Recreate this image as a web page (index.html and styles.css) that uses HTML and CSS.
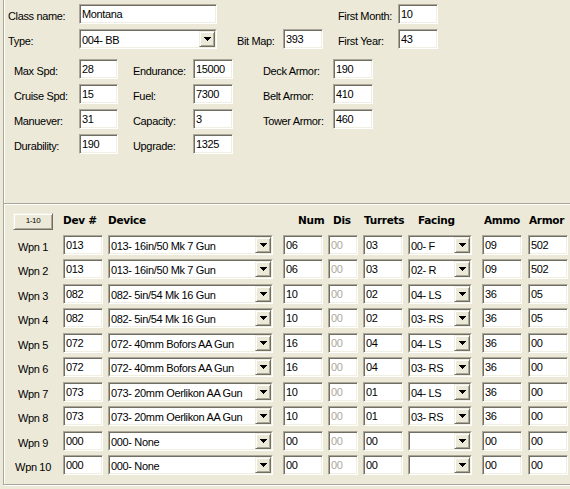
FILE: index.html
```html
<!DOCTYPE html>
<html>
<head>
<meta charset="utf-8">
<link rel="stylesheet" href="styles.css">
</head>
<body>
<div class="frame">
  <div class="top">
    <div class="row">
      <div class="lbl lbl-name">Class name:</div>
      <div class="edit w-wide">Montana</div>
      <div class="lbl lbl-first gap-month">First Month:</div>
      <div class="edit w40">10</div>
    </div>
    <div class="row">
      <div class="lbl lbl-name">Type:</div>
      <div class="combo w-wide"><div class="combo-in"><span class="combo-text">004- BB</span><span class="drop"><svg width="7" height="4" viewBox="0 0 7 4"><path d="M0 0h7v1H0zM1 1h5v1H1zM2 2h3v1H2zM3 3h1v1H3z"/></svg></span></div></div>
      <div class="lbl lbl-bitmap gap-bitmap">Bit Map:</div>
      <div class="edit w40">393</div>
      <div class="lbl lbl-first gap-year">First Year:</div>
      <div class="edit w40">43</div>
    </div>
    <div class="stats">
      <div class="sgrid s1">
        <div class="lbl">Max Spd:</div><div class="edit">28</div>
        <div class="lbl">Cruise Spd:</div><div class="edit">15</div>
        <div class="lbl">Manuever:</div><div class="edit">31</div>
        <div class="lbl">Durability:</div><div class="edit">190</div>
      </div>
      <div class="sgrid s2">
        <div class="lbl">Endurance:</div><div class="edit">15000</div>
        <div class="lbl">Fuel:</div><div class="edit">7300</div>
        <div class="lbl">Capacity:</div><div class="edit">3</div>
        <div class="lbl">Upgrade:</div><div class="edit">1325</div>
      </div>
      <div class="sgrid s3">
        <div class="lbl">Deck Armor:</div><div class="edit">190</div>
        <div class="lbl">Belt Armor:</div><div class="edit">410</div>
        <div class="lbl">Tower Armor:</div><div class="edit">460</div>
      </div>
    </div>
  </div>
  <div class="bottom">
    <div class="wpn">
      <div class="btn">1-10</div>
      <div class="hd">Dev #</div>
      <div class="hd">Device</div>
      <div class="hd hd-num">Num</div>
      <div class="hd hd-dis">Dis</div>
      <div class="hd hd-tur">Turrets</div>
      <div class="hd hd-fac">Facing</div>
      <div class="hd hd-amm">Ammo</div>
      <div class="hd hd-arm">Armor</div>

      <div class="wl">Wpn 1</div><div class="edit">013</div>
      <div class="combo w-dev"><div class="combo-in"><span class="combo-text">013- 16in/50 Mk 7 Gun</span><span class="drop"><svg width="7" height="4" viewBox="0 0 7 4"><path d="M0 0h7v1H0zM1 1h5v1H1zM2 2h3v1H2zM3 3h1v1H3z"/></svg></span></div></div>
      <div class="edit">06</div><div class="edit dis">00</div><div class="edit">03</div>
      <div class="combo w-fac"><div class="combo-in"><span class="combo-text">00- F</span><span class="drop"><svg width="7" height="4" viewBox="0 0 7 4"><path d="M0 0h7v1H0zM1 1h5v1H1zM2 2h3v1H2zM3 3h1v1H3z"/></svg></span></div></div>
      <div class="edit">09</div><div class="edit arm">502</div>

      <div class="wl">Wpn 2</div><div class="edit">013</div>
      <div class="combo w-dev"><div class="combo-in"><span class="combo-text">013- 16in/50 Mk 7 Gun</span><span class="drop"><svg width="7" height="4" viewBox="0 0 7 4"><path d="M0 0h7v1H0zM1 1h5v1H1zM2 2h3v1H2zM3 3h1v1H3z"/></svg></span></div></div>
      <div class="edit">06</div><div class="edit dis">00</div><div class="edit">03</div>
      <div class="combo w-fac"><div class="combo-in"><span class="combo-text">02- R</span><span class="drop"><svg width="7" height="4" viewBox="0 0 7 4"><path d="M0 0h7v1H0zM1 1h5v1H1zM2 2h3v1H2zM3 3h1v1H3z"/></svg></span></div></div>
      <div class="edit">09</div><div class="edit arm">502</div>

      <div class="wl">Wpn 3</div><div class="edit">082</div>
      <div class="combo w-dev"><div class="combo-in"><span class="combo-text">082- 5in/54 Mk 16 Gun</span><span class="drop"><svg width="7" height="4" viewBox="0 0 7 4"><path d="M0 0h7v1H0zM1 1h5v1H1zM2 2h3v1H2zM3 3h1v1H3z"/></svg></span></div></div>
      <div class="edit">10</div><div class="edit dis">00</div><div class="edit">02</div>
      <div class="combo w-fac"><div class="combo-in"><span class="combo-text">04- LS</span><span class="drop"><svg width="7" height="4" viewBox="0 0 7 4"><path d="M0 0h7v1H0zM1 1h5v1H1zM2 2h3v1H2zM3 3h1v1H3z"/></svg></span></div></div>
      <div class="edit">36</div><div class="edit arm">05</div>

      <div class="wl">Wpn 4</div><div class="edit">082</div>
      <div class="combo w-dev"><div class="combo-in"><span class="combo-text">082- 5in/54 Mk 16 Gun</span><span class="drop"><svg width="7" height="4" viewBox="0 0 7 4"><path d="M0 0h7v1H0zM1 1h5v1H1zM2 2h3v1H2zM3 3h1v1H3z"/></svg></span></div></div>
      <div class="edit">10</div><div class="edit dis">00</div><div class="edit">02</div>
      <div class="combo w-fac"><div class="combo-in"><span class="combo-text">03- RS</span><span class="drop"><svg width="7" height="4" viewBox="0 0 7 4"><path d="M0 0h7v1H0zM1 1h5v1H1zM2 2h3v1H2zM3 3h1v1H3z"/></svg></span></div></div>
      <div class="edit">36</div><div class="edit arm">05</div>

      <div class="wl">Wpn 5</div><div class="edit">072</div>
      <div class="combo w-dev"><div class="combo-in"><span class="combo-text">072- 40mm Bofors AA Gun</span><span class="drop"><svg width="7" height="4" viewBox="0 0 7 4"><path d="M0 0h7v1H0zM1 1h5v1H1zM2 2h3v1H2zM3 3h1v1H3z"/></svg></span></div></div>
      <div class="edit">16</div><div class="edit dis">00</div><div class="edit">04</div>
      <div class="combo w-fac"><div class="combo-in"><span class="combo-text">04- LS</span><span class="drop"><svg width="7" height="4" viewBox="0 0 7 4"><path d="M0 0h7v1H0zM1 1h5v1H1zM2 2h3v1H2zM3 3h1v1H3z"/></svg></span></div></div>
      <div class="edit">36</div><div class="edit arm">00</div>

      <div class="wl">Wpn 6</div><div class="edit">072</div>
      <div class="combo w-dev"><div class="combo-in"><span class="combo-text">072- 40mm Bofors AA Gun</span><span class="drop"><svg width="7" height="4" viewBox="0 0 7 4"><path d="M0 0h7v1H0zM1 1h5v1H1zM2 2h3v1H2zM3 3h1v1H3z"/></svg></span></div></div>
      <div class="edit">16</div><div class="edit dis">00</div><div class="edit">04</div>
      <div class="combo w-fac"><div class="combo-in"><span class="combo-text">03- RS</span><span class="drop"><svg width="7" height="4" viewBox="0 0 7 4"><path d="M0 0h7v1H0zM1 1h5v1H1zM2 2h3v1H2zM3 3h1v1H3z"/></svg></span></div></div>
      <div class="edit">36</div><div class="edit arm">00</div>

      <div class="wl">Wpn 7</div><div class="edit">073</div>
      <div class="combo w-dev"><div class="combo-in"><span class="combo-text">073- 20mm Oerlikon AA Gun</span><span class="drop"><svg width="7" height="4" viewBox="0 0 7 4"><path d="M0 0h7v1H0zM1 1h5v1H1zM2 2h3v1H2zM3 3h1v1H3z"/></svg></span></div></div>
      <div class="edit">10</div><div class="edit dis">00</div><div class="edit">01</div>
      <div class="combo w-fac"><div class="combo-in"><span class="combo-text">04- LS</span><span class="drop"><svg width="7" height="4" viewBox="0 0 7 4"><path d="M0 0h7v1H0zM1 1h5v1H1zM2 2h3v1H2zM3 3h1v1H3z"/></svg></span></div></div>
      <div class="edit">36</div><div class="edit arm">00</div>

      <div class="wl">Wpn 8</div><div class="edit">073</div>
      <div class="combo w-dev"><div class="combo-in"><span class="combo-text">073- 20mm Oerlikon AA Gun</span><span class="drop"><svg width="7" height="4" viewBox="0 0 7 4"><path d="M0 0h7v1H0zM1 1h5v1H1zM2 2h3v1H2zM3 3h1v1H3z"/></svg></span></div></div>
      <div class="edit">10</div><div class="edit dis">00</div><div class="edit">01</div>
      <div class="combo w-fac"><div class="combo-in"><span class="combo-text">03- RS</span><span class="drop"><svg width="7" height="4" viewBox="0 0 7 4"><path d="M0 0h7v1H0zM1 1h5v1H1zM2 2h3v1H2zM3 3h1v1H3z"/></svg></span></div></div>
      <div class="edit">36</div><div class="edit arm">00</div>

      <div class="wl">Wpn 9</div><div class="edit">000</div>
      <div class="combo w-dev"><div class="combo-in"><span class="combo-text">000- None</span><span class="drop"><svg width="7" height="4" viewBox="0 0 7 4"><path d="M0 0h7v1H0zM1 1h5v1H1zM2 2h3v1H2zM3 3h1v1H3z"/></svg></span></div></div>
      <div class="edit">00</div><div class="edit dis">00</div><div class="edit">00</div>
      <div class="combo w-fac"><div class="combo-in"><span class="combo-text"></span><span class="drop"><svg width="7" height="4" viewBox="0 0 7 4"><path d="M0 0h7v1H0zM1 1h5v1H1zM2 2h3v1H2zM3 3h1v1H3z"/></svg></span></div></div>
      <div class="edit">00</div><div class="edit arm">00</div>

      <div class="wl">Wpn 10</div><div class="edit">000</div>
      <div class="combo w-dev"><div class="combo-in"><span class="combo-text">000- None</span><span class="drop"><svg width="7" height="4" viewBox="0 0 7 4"><path d="M0 0h7v1H0zM1 1h5v1H1zM2 2h3v1H2zM3 3h1v1H3z"/></svg></span></div></div>
      <div class="edit">00</div><div class="edit dis">00</div><div class="edit">00</div>
      <div class="combo w-fac"><div class="combo-in"><span class="combo-text"></span><span class="drop"><svg width="7" height="4" viewBox="0 0 7 4"><path d="M0 0h7v1H0zM1 1h5v1H1zM2 2h3v1H2zM3 3h1v1H3z"/></svg></span></div></div>
      <div class="edit">00</div><div class="edit arm">00</div>
    </div>
  </div>
</div>
</body>
</html>
```
FILE: styles.css
```css
* { box-sizing: border-box; }
html, body { margin: 0; padding: 0; }
body {
  background: #ECE9D8;
  font-family: "Liberation Sans", Arial, sans-serif;
  font-size: 11px;
  letter-spacing: -0.35px;
  color: #000;
  width: 570px;
  height: 489px;
  overflow: hidden;
}
.frame {
  margin-left: 3px;
  border-left: 1px solid #ACA899;
  box-shadow: inset 1px 0 0 #fff;
}
.top {
  height: 204px;
  border-bottom: 1px solid #ACA899;
  padding: 4px 0 0 4px;
}
.bottom {
  height: 281px;
  border-top: 1px solid #fff;
  border-bottom: 1px solid #ACA899;
  box-shadow: 0 1px 0 #fff;
  padding: 8px 0 0 9px;
}
.row { display: flex; height: 20px; }
.row + .row { margin-top: 5px; }
.lbl {
  line-height: 14px;
  padding-top: 5px;
  white-space: nowrap;
}
.lbl-name { width: 71px; }
.lbl-first { width: 60px; }
.lbl-bitmap { width: 46px; }
.gap-month { margin-left: 121px; }
.gap-bitmap { margin-left: 20px; }
.gap-year { margin-left: 15px; }
.w-wide { width: 138px; }
.w40 { width: 40px; }
.edit {
  height: 20px;
  border: 1px solid;
  border-color: #ACA899 #fff #fff #ACA899;
  box-shadow: inset 1px 1px 0 #716F64, inset -1px -1px 0 #F1EFE2;
  background: #fff;
  padding: 2px 0 0 2px;
  line-height: 14px;
  white-space: nowrap;
  overflow: hidden;
}
.combo {
  height: 20px;
  border: 1px solid;
  border-color: #ACA899 #fff #fff #ACA899;
}
.combo-in {
  height: 100%;
  display: flex;
  border: 1px solid;
  border-color: #716F64 #F1EFE2 #F1EFE2 #716F64;
  background: #fff;
}
.combo-text {
  flex: 1;
  padding: 2px 0 0 1px;
  line-height: 14px;
  white-space: nowrap;
  overflow: hidden;
}
.drop {
  width: 16px;
  height: 16px;
  flex: none;
  display: flex;
  align-items: center;
  justify-content: center;
  background: #ECE9D8;
  border: 1px solid;
  border-color: #F1EFE2 #716F64 #716F64 #F1EFE2;
  box-shadow: inset 1px 1px 0 #fff, inset -1px -1px 0 #ACA899;
}
.drop svg { display: block; fill: #000; }
.stats { display: flex; margin-top: 10px; align-items: flex-start; }
.sgrid { display: grid; grid-auto-rows: 20px; row-gap: 5px; }
.s1 { grid-template-columns: 65px 39px; margin-left: 6px; }
.s2 { grid-template-columns: 60px 40px; margin-left: 15px; }
.s3 { grid-template-columns: 70px 40px; margin-left: 30px; }

.wpn {
  display: grid;
  grid-template-columns: 45px 40px 170px 40px 30px 40px 69px 40px 41px;
  grid-template-rows: 17px;
  grid-auto-rows: 20px;
  column-gap: 5px;
  row-gap: 4.5px;
}
.btn {
  width: 40px;
  height: 17px;
  background: #ECE9D8;
  border: 1px solid;
  border-color: #F1EFE2 #716F64 #716F64 #F1EFE2;
  box-shadow: inset 1px 1px 0 #fff, inset -1px -1px 0 #ACA899;
  font-size: 8px;
  letter-spacing: -0.4px;
  text-align: center;
  line-height: 14px;
}
.hd {
  font-family: "DejaVu Sans", Verdana, sans-serif;
  font-weight: bold;
  font-size: 10.5px;
  letter-spacing: -0.3px;
  line-height: 15px;
  white-space: nowrap;
}
.hd-num { padding-left: 15px; }
.hd-dis { padding-left: 5px; }
.hd-tur { padding-left: 1px; }
.hd-fac { padding-left: 10px; }
.hd-amm { padding-left: 2px; }
.hd-arm { padding-left: 2px; }
.wl {
  padding: 5px 5px 0 0;
  line-height: 14px;
  text-align: center;
  white-space: nowrap;
}
.w-dev { width: 165px; }
.w-fac { width: 64px; }
.dis { color: #ACA899; }
.arm { width: 40px; justify-self: end; }
```
